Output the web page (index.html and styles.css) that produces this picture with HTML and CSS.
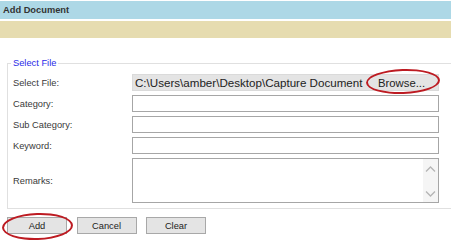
FILE: index.html
```html
<!DOCTYPE html>
<html>
<head>
<meta charset="utf-8">
<link rel="stylesheet" href="styles.css">
</head>
<body>
<div class="page">
  <div class="titlebar">Add Document</div>
  <div class="toolbar"></div>
  <fieldset class="panel">
    <legend class="legend">Select File</legend>
    <div class="form">
      <label class="lbl">Select File:</label>
      <div class="file">
        <span class="path">C:\Users\amber\Desktop\Capture Document</span>
        <span class="browse">Browse...</span>
        <span class="ring ring-browse"></span>
      </div>
      <label class="lbl">Category:</label>
      <input class="field" type="text">
      <label class="lbl">Sub Category:</label>
      <input class="field" type="text">
      <label class="lbl">Keyword:</label>
      <input class="field" type="text">
      <label class="lbl">Remarks:</label>
      <div class="remarks">
        <div class="scroll">
          <svg width="11" height="8" viewBox="0 0 11 8"><path d="M1 6.5 L5.5 2 L10 6.5" fill="none" stroke="#b5b5b5" stroke-width="1.3"/></svg>
          <svg width="11" height="8" viewBox="0 0 11 8"><path d="M1 1.5 L5.5 6 L10 1.5" fill="none" stroke="#b5b5b5" stroke-width="1.3"/></svg>
        </div>
      </div>
    </div>
  </fieldset>
  <div class="actions">
    <button class="btn btn-add">Add<span class="ring ring-add"></span></button>
    <button class="btn btn-cancel">Cancel</button>
    <button class="btn">Clear</button>
  </div>
</div>
</body>
</html>
```

FILE: styles.css
```css
html, body {
  margin: 0;
  padding: 0;
  background: #ffffff;
  overflow: hidden;
}
body {
  width: 451px;
  height: 244px;
  font-family: "Liberation Sans", Arial, sans-serif;
  color: #333333;
}
.page {
  padding-top: 1px;
}
.titlebar {
  height: 18px;
  line-height: 18px;
  background: #add8e6;
  font-weight: bold;
  font-size: 9.3px;
  padding-left: 3px;
  color: #333333;
}
.toolbar {
  margin-top: 2px;
  height: 17px;
  background: #e6dcb0;
}
.panel {
  margin: 19px 0 0 7px;
  width: 460px;
  border: 1px solid #e0e0e0;
  padding: 0 0 5px 3px;
}
.legend {
  font-size: 9.3px;
  line-height: 12px;
  color: #2a2ae8;
  padding: 0 2px;
}
.form {
  display: grid;
  grid-template-columns: 121px 307px;
  grid-template-rows: 17px 17px 17px 17px 45px;
  row-gap: 4px;
  align-items: center;
  padding-top: 5px;
}
.lbl {
  font-size: 9.3px;
  color: #3a3a3a;
  padding-left: 2px;
}
.file {
  position: relative;
  height: 17px;
  box-sizing: border-box;
  display: flex;
  align-items: center;
  background: #e4e4e4;
  border: 1px solid #dadada;
  font-size: 11.6px;
  color: #222222;
}
.path {
  flex: 1;
  min-width: 0;
  white-space: nowrap;
  padding-left: 2px;
}
.browse {
  width: 72px;
  flex: none;
  font-size: 11.3px;
  padding-left: 12px;
  box-sizing: border-box;
}
.field {
  height: 17px;
  width: 307px;
  box-sizing: border-box;
  border: 1px solid #a6a6a6;
  margin: 0;
  padding: 0;
  background: #ffffff;
}
.remarks {
  height: 45px;
  width: 307px;
  box-sizing: border-box;
  border: 1px solid #a6a6a6;
  display: flex;
  justify-content: flex-end;
}
.scroll {
  width: 15px;
  background: #f5f5f5;
  display: flex;
  flex-direction: column;
  justify-content: space-between;
  align-items: center;
  padding: 6px 0 4px;
}
.actions {
  display: flex;
  gap: 9.5px;
  margin: 8px 0 0 7px;
}
.btn {
  position: relative;
  width: 60px;
  height: 17px;
  box-sizing: border-box;
  border: 1px solid #a8a8a8;
  background: #e4e4e4;
  font-family: "Liberation Sans", Arial, sans-serif;
  font-size: 9.3px;
  color: #222222;
  padding: 0;
  margin: 0;
}
.ring {
  position: absolute;
  border: 2.5px solid #bd1b22;
  border-radius: 50%;
  box-sizing: border-box;
  pointer-events: none;
}
.ring-browse {
  left: 233px;
  top: -6px;
  width: 74px;
  height: 25px;
  transform: rotate(-2deg);
}
.ring-add {
  left: -6px;
  top: -5px;
  width: 71px;
  height: 27px;
  transform: rotate(-2deg);
}
```
